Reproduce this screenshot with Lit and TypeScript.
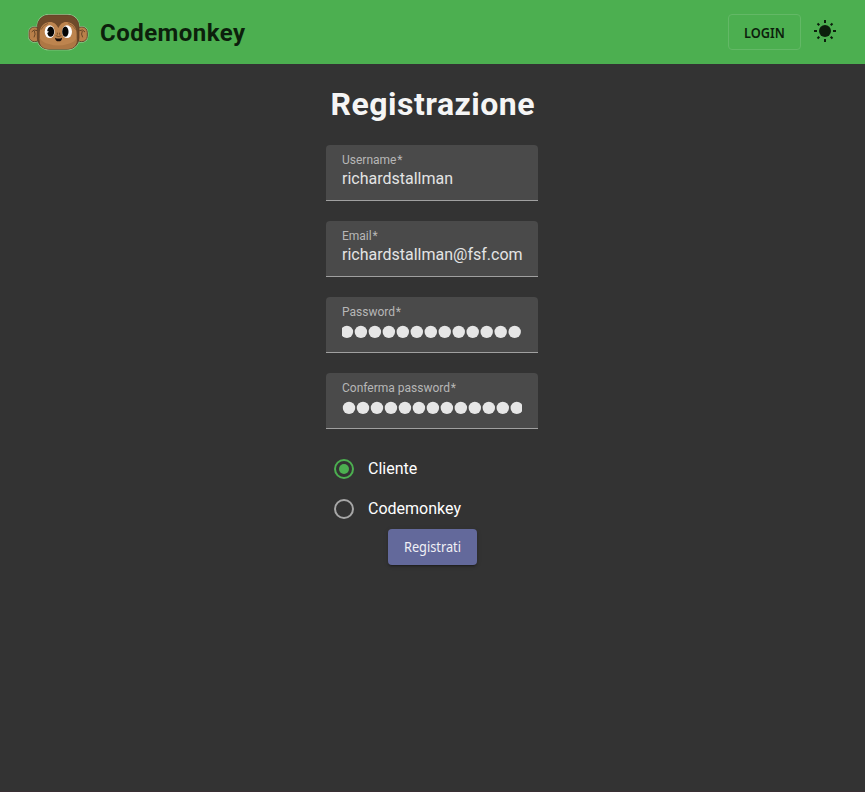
import { LitElement, html, css, svg } from "lit";
import { customElement, property } from "lit/decorators.js";

@customElement("monkey-logo")
class MonkeyLogo extends LitElement {
  static styles = css`
    :host { display: block; width: 64px; height: 40px; }
    svg { display: block; }
  `;
  render() {
    return html`<svg width="64" height="40" viewBox="18 21 192 120">
      <g stroke="#a5d79f" stroke-width="6" fill="#a5d79f">
        <rect x="53" y="30" width="123" height="103" rx="34" />
        <rect x="27" y="66" width="34" height="44" rx="17" />
        <rect x="168" y="66" width="34" height="44" rx="17" />
      </g>
      <g fill="#b9804a" stroke="#513620" stroke-width="2.5">
        <rect x="27" y="66" width="34" height="44" rx="16" />
        <rect x="168" y="66" width="34" height="44" rx="16" />
      </g>
      <g fill="none" stroke="#54391f" stroke-width="2.5">
        <path d="M35 81Q41 71 52 77M43 78Q48 87 42 97" />
        <path d="M195 81Q189 71 178 77M187 78Q182 87 188 97" />
      </g>
      <rect x="52" y="30" width="125" height="103" rx="34" fill="#6f4a2a" stroke="#5a3d22" stroke-width="2" />
      <path d="M59 88C58 68 69 53 88 51C101 50 109 57 115 69C121 57 128 50 141 51C160 53 171 68 170 88V101Q172 130 143 131H86Q57 130 59 101Z" fill="#bd844e" />
      <path d="M59 98Q66 113 87 117Q114 126 143 117Q164 112 170 98V101Q172 131 143 131H86Q57 131 59 101Z" fill="#ad7744" />
      <path d="M63 74Q70 59 84 55M145 55Q160 59 167 74" fill="none" stroke="#8d5c34" stroke-width="3" />
      <ellipse cx="89" cy="80" rx="15" ry="19" fill="#fff" />
      <ellipse cx="141" cy="80" rx="15" ry="19" fill="#fff" />
      <ellipse cx="92" cy="80" rx="10.5" ry="15.5" fill="#050505" />
      <ellipse cx="136" cy="80" rx="9.5" ry="15.5" fill="#050505" />
      <path d="M79 77L87 80L80 85Z" fill="#fff" />
      <path d="M112 83V89M119 83V89M107 92Q116 97 124 92" fill="none" stroke="#68431f" stroke-width="2.5" />
      <path d="M105 98Q116 103 126 98Q126 109 116 109Q106 109 105 98Z" fill="#160d0b" />
    </svg>`;
  }
}

@customElement("form-field")
class FormField extends LitElement {
  @property() label = "";
  @property() value = "";
  @property({ type: Number }) shift = 0;
  @property({ type: Boolean }) secret = false;
  static styles = css`
    :host {
      display: block; box-sizing: border-box; width: 212px; height: 56px;
      padding: 8px 16px 0; background: #4a4a4a; border-radius: 4px 4px 0 0;
      border-bottom: 1px solid #a0a0a0;
    }
    .label { font-size: 12px; line-height: 14px; color: #b7b7b7; white-space: nowrap; }
    .star { margin-left: .7px; }
    .value { font-size: 16px; line-height: 24px; color: #e4e4e4; white-space: nowrap; }
    svg { display: block; overflow: hidden; }
  `;
  render() {
    const dots = Array.from({ length: 14 }, (_, i) =>
      i * 13.98 + this.shift < 184 ? svg`<circle cx=${this.shift + i * 13.98} cy="12.9" r="6.2" fill="#e6e6e6" />` : "");
    return html`<div class="label">${this.label}<span class="star">*</span></div>
      ${this.secret
        ? html`<svg width="180" height="24">${dots}</svg>`
        : html`<div class="value">${this.value}</div>`}`;
  }
}

@customElement("radio-option")
class RadioOption extends LitElement {
  @property() label = "";
  @property({ type: Boolean }) checked = false;
  static styles = css`
    :host { display: flex; align-items: center; height: 40px; gap: 14px; padding-left: 8px; font-size: 16px; color: #fff; }
    .ring { box-sizing: border-box; width: 20px; height: 20px; border: 2px solid #a7a7a7; border-radius: 50%; display: grid; place-items: center; }
    .on { border-color: #4caf50; }
    .dot { width: 10px; height: 10px; border-radius: 50%; background: #4caf50; }
    .text { padding-bottom: 2px; }
  `;
  render() {
    return html`<span class="ring ${this.checked ? "on" : ""}">${this.checked ? html`<span class="dot"></span>` : ""}</span>
      <span class="text">${this.label}</span>`;
  }
}

@customElement("app-root")
class AppRoot extends LitElement {
  static styles = css`
    :host {
      display: flex; flex-direction: column; box-sizing: border-box; height: 100vh; overflow: hidden;
      background: #333; border-bottom: 1px solid #392f34; color: #fff; font-family: Roboto, sans-serif;
    }
    header { display: flex; align-items: center; flex: none; box-sizing: border-box; height: 64px; padding: 0 28px 0 26px; background: #4caf50; color: #0c1f0c; }
    .name { flex: 1; margin-left: 10px; font-size: 24px; font-weight: 700; line-height: 32px; padding-top: 2px; letter-spacing: .46px; }
    button { box-sizing: border-box; height: 36px; border-radius: 4px; font: 500 14px/34px "Noto Sans", sans-serif; padding: 0; }
    button span { display: block; }
    .login { width: 73px; background: none; border: 1px solid #63b866; color: #0c1f0c; padding-top: 1px; font-weight: 600; }
    .login span { transform: scaleX(.91); }
    .submit span { transform: scaleX(.91); }
    .sun { display: block; margin: 0 0 2px 12px; }
    main { display: flex; flex-direction: column; width: 864px; align-items: center; }
    h1 { margin: 20px 0 21px; padding-left: 1.5px; font-size: 32px; line-height: 40px; font-weight: 700; color: #f5f5f5; letter-spacing: .5px; }
    .fields { display: flex; flex-direction: column; gap: 20px; }
    .options { width: 212px; margin-top: 20px; }
    .submit { width: 89px; margin-left: 1px; background: #63699b; border: 0; color: #f0f0f5; font-weight: 400; box-shadow: 0 3px 1px -2px #0003, 0 2px 2px #0002, 0 1px 5px #0002; }
  `;
  render() {
    return html`<header>
        <monkey-logo></monkey-logo>
        <div class="name">Codemonkey</div>
        <button class="login"><span>LOGIN</span></button>
        <svg class="sun" width="24" height="24" viewBox="0 0 24 24">
          <circle cx="12" cy="12" r="6" fill="#0c1f0c" />
          <path d="M12 1V4M12 20v3M1 12H4M20 12h3M4.5 4.5l1.8 1.8M17.7 17.7l1.8 1.8M4.5 19.5l1.8-1.8M17.7 6.3l1.8-1.8" stroke="#0c1f0c" stroke-width="2" />
        </svg>
      </header>
      <main>
        <h1>Registrazione</h1>
        <div class="fields">
          <form-field label="Username" value="richardstallman"></form-field>
          <form-field label="Email" value="richardstallman@fsf.com"></form-field>
          <form-field label="Password" secret shift="4.9"></form-field>
          <form-field label="Conferma password" secret shift="7"></form-field>
        </div>
        <div class="options">
          <radio-option label="Cliente" checked></radio-option>
          <radio-option label="Codemonkey"></radio-option>
        </div>
        <button class="submit"><span>Registrati</span></button>
      </main>`;
  }
}
